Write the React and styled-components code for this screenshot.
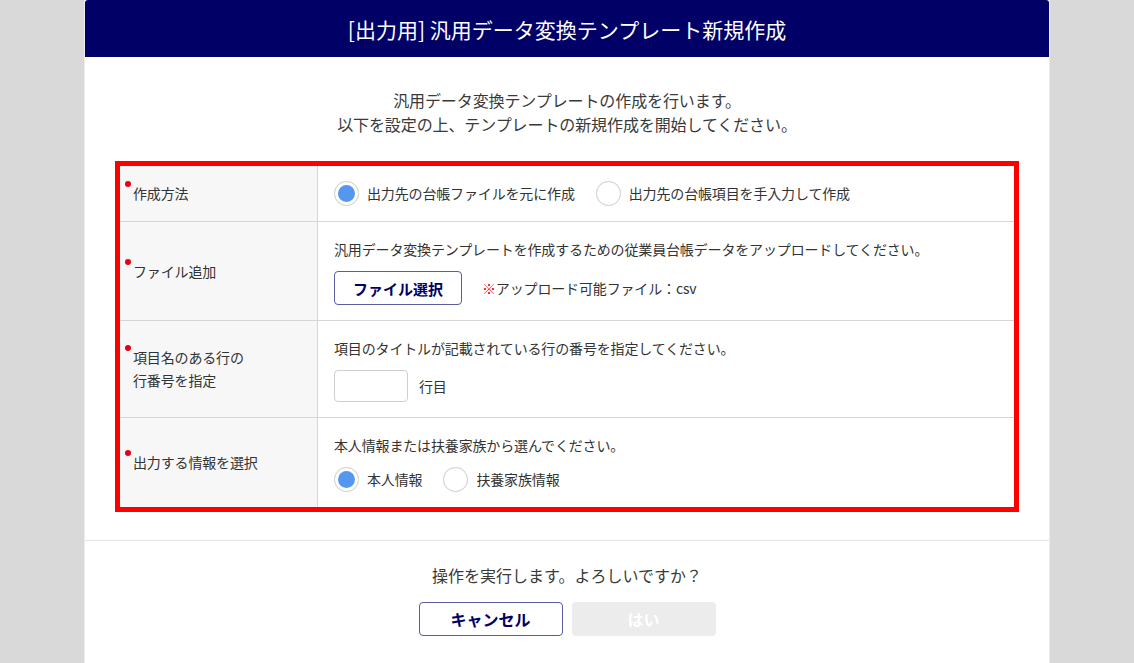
import React from "react";
import styled, { createGlobalStyle } from "styled-components";

const Global = createGlobalStyle`
  html, body { margin: 0; padding: 0; }
  body {
    background: #d9d9d9;
    font-family: "Noto Sans CJK JP", "Noto Sans", sans-serif;
    color: #333;
  }
  * { box-sizing: border-box; }
`;

const Page = styled.div`
  display: flex;
  justify-content: flex-start;
  padding-left: 84px;
  min-height: 663px;
`;

const Modal = styled.div`
  width: 966px;
  background: #fff;
  border-left: 1px solid #ececec;
  border-right: 1px solid #ececec;
  min-height: 663px;
`;

const Header = styled.div`
  height: 57px;
  background: #000066;
  color: #fff;
  font-size: 21px;
  display: flex;
  align-items: center;
  justify-content: center;
  border-radius: 3px 3px 0 0;
`;

const Body = styled.div`
  padding: 31px 0 28px;
  display: flex;
  flex-direction: column;
  align-items: center;
  border-bottom: 1px solid #e6e6e6;
`;

const Intro = styled.p`
  margin: 0;
  font-size: 16px;
  line-height: 24px;
  text-align: center;
  color: #3a3a3a;
  letter-spacing: -0.1px;
`;

const Highlight = styled.div`
  margin-top: 25px;
  width: 904px;
  border: 5px solid #ff0000;
`;

const Table = styled.div`
  display: grid;
  grid-template-columns: 198px 1fr;
`;

const Label = styled.div`
  background: #f7f7f7;
  border-right: 1px solid #d6d6d6;
  border-bottom: ${(p) => (p.$last ? "none" : "1px solid #d6d6d6")};
  padding-left: 13px;
  display: flex;
  align-items: center;
  font-size: 14px;
  line-height: 23px;
  color: #333;
  letter-spacing: -0.15px;
`;

const LabelText = styled.span`
  position: relative;
  &::before {
    content: "";
    position: absolute;
    left: -8px;
    top: -1px;
    width: 6px;
    height: 6px;
    border-radius: 50%;
    background: #e60012;
  }
`;

const Cell = styled.div`
  border-bottom: ${(p) => (p.$last ? "none" : "1px solid #d6d6d6")};
  padding: 15px 16px 15px;
  display: flex;
  flex-direction: column;
  gap: 10px;
  font-size: 14px;
  line-height: 24px;
  letter-spacing: -0.15px;
`;

const Line = styled.div`
  display: flex;
  align-items: center;
  gap: ${(p) => p.$gap || 0}px;
`;

const RadioGroup = styled.div`
  display: flex;
  align-items: center;
  gap: 21px;
`;

const RadioOption = styled.label`
  display: flex;
  align-items: center;
  gap: 8px;
  font-size: 14px;
  color: #333;
  line-height: 25px;
`;

const RadioCircle = styled.span`
  width: 25px;
  height: 25px;
  border-radius: 50%;
  border: 1px solid #cfcfcf;
  background: #fff;
  display: flex;
  align-items: center;
  justify-content: center;
  box-shadow: 0 0 1px rgba(0, 0, 0, 0.08);
  &::after {
    content: "";
    width: 17px;
    height: 17px;
    border-radius: 50%;
    background: ${(p) => (p.$checked ? "#5596ee" : "transparent")};
  }
`;

const OutlineButton = styled.button`
  height: 34px;
  width: ${(p) => p.$w}px;
  border: 1px solid #5b5b9f;
  border-radius: 4px;
  background: #fff;
  color: #000066;
  font-family: inherit;
  font-weight: 700;
  font-size: ${(p) => p.$fs || 15}px;
  padding: 0;
  cursor: pointer;
`;

const DisabledButton = styled.button`
  height: 34px;
  width: 144px;
  border: none;
  border-radius: 4px;
  background: #ececec;
  color: #fff;
  font-family: inherit;
  font-weight: 700;
  font-size: 16px;
  padding: 0;
`;

const Note = styled.span`
  font-size: 14px;
  color: #333;
`;

const Mark = styled.span`
  color: #e60012;
  font-weight: 700;
`;

const NumberInput = styled.input`
  width: 74px;
  height: 32px;
  border: 1px solid #cfcfcf;
  border-radius: 4px;
  font-family: inherit;
  font-size: 14px;
  padding: 0 8px;
  outline: none;
`;

const Footer = styled.div`
  padding-top: 22px;
  display: flex;
  flex-direction: column;
  align-items: center;
`;

const Confirm = styled.p`
  margin: 0;
  font-size: 16px;
  line-height: 24px;
  color: #3a3a3a;
`;

const Buttons = styled.div`
  margin-top: 15px;
  display: flex;
  gap: 9px;
`;

function Radio({ checked, children }) {
  return (
    <RadioOption>
      <RadioCircle $checked={checked} />
      {children}
    </RadioOption>
  );
}

export default function App() {
  return (
    <>
      <Global />
      <Page>
        <Modal>
          <Header>[出力用] 汎用データ変換テンプレート新規作成</Header>
          <Body>
            <Intro>
              汎用データ変換テンプレートの作成を行います。
              <br />
              以下を設定の上、テンプレートの新規作成を開始してください。
            </Intro>
            <Highlight>
              <Table>
                <Label>
                  <LabelText>作成方法</LabelText>
                </Label>
                <Cell>
                  <RadioGroup>
                    <Radio checked>出力先の台帳ファイルを元に作成</Radio>
                    <Radio>出力先の台帳項目を手入力して作成</Radio>
                  </RadioGroup>
                </Cell>

                <Label>
                  <LabelText>ファイル追加</LabelText>
                </Label>
                <Cell>
                  <Line>汎用データ変換テンプレートを作成するための従業員台帳データをアップロードしてください。</Line>
                  <Line $gap={20}>
                    <OutlineButton $w={128}>ファイル選択</OutlineButton>
                    <Note>
                      <Mark>※</Mark>アップロード可能ファイル：csv
                    </Note>
                  </Line>
                </Cell>

                <Label>
                  <LabelText>
                    項目名のある行の
                    <br />
                    行番号を指定
                  </LabelText>
                </Label>
                <Cell>
                  <Line>項目のタイトルが記載されている行の番号を指定してください。</Line>
                  <Line $gap={11}>
                    <NumberInput type="text" />
                    <Note>行目</Note>
                  </Line>
                </Cell>

                <Label $last>
                  <LabelText>出力する情報を選択</LabelText>
                </Label>
                <Cell $last>
                  <Line>本人情報または扶養家族から選んでください。</Line>
                  <RadioGroup>
                    <Radio checked>本人情報</Radio>
                    <Radio>扶養家族情報</Radio>
                  </RadioGroup>
                </Cell>
              </Table>
            </Highlight>
          </Body>
          <Footer>
            <Confirm>操作を実行します。よろしいですか？</Confirm>
            <Buttons>
              <OutlineButton $w={144} $fs={16}>キャンセル</OutlineButton>
              <DisabledButton disabled>はい</DisabledButton>
            </Buttons>
          </Footer>
        </Modal>
      </Page>
    </>
  );
}
